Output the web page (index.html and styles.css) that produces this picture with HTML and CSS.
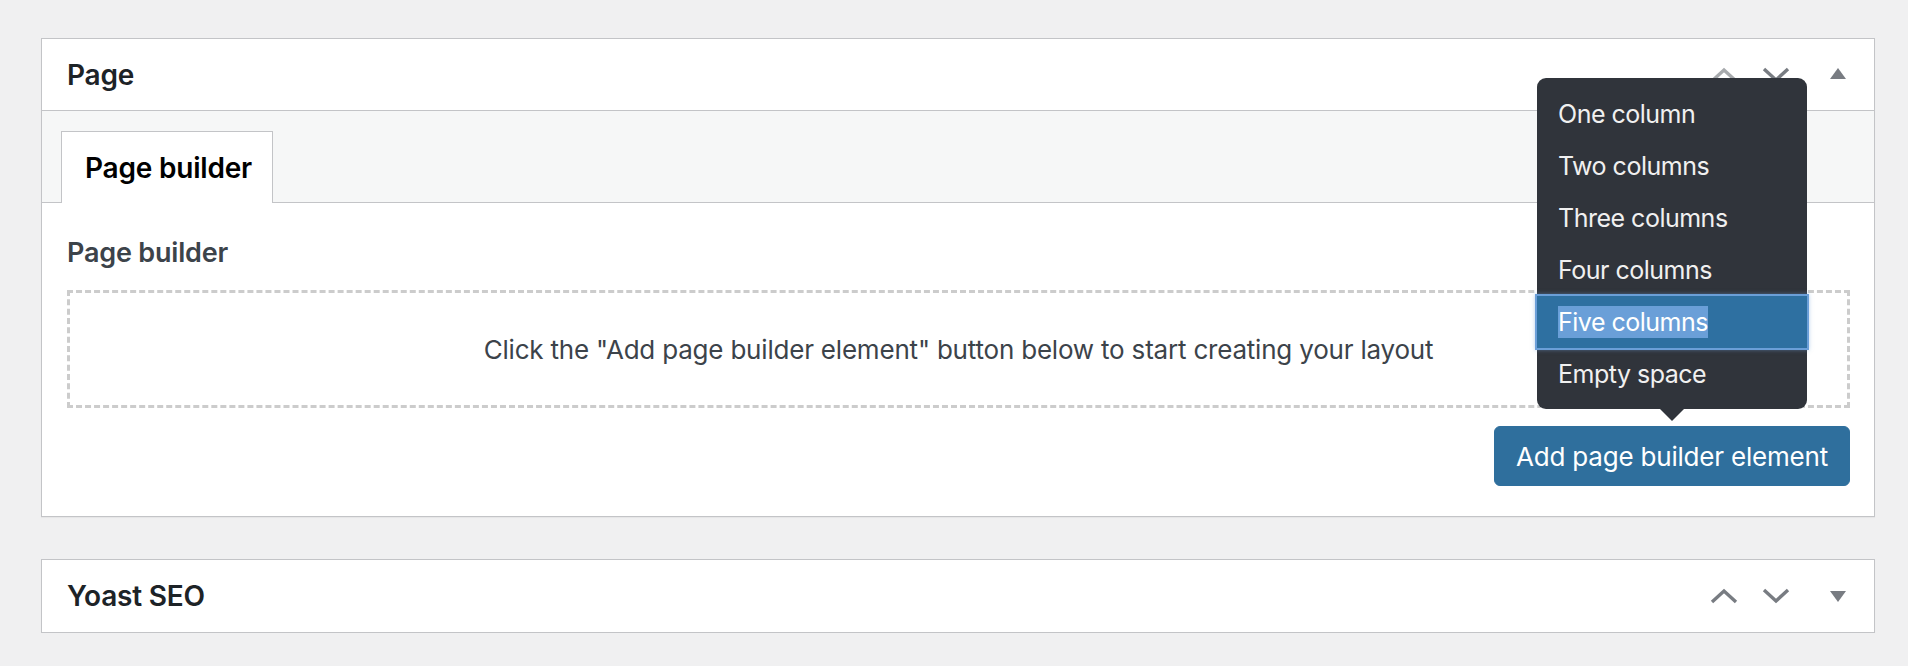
FILE: index.html
```html
<!DOCTYPE html>
<html lang="en">
<head>
<meta charset="utf-8">
<title>Page builder</title>
<link rel="stylesheet" href="styles.css">
</head>
<body>
<div class="postbox">
  <div class="postbox-header">
    <h2 class="hndle">Page</h2>
    <div class="handle-actions">
      <button class="handle-order is-disabled" aria-label="Move up">
        <svg width="28" height="16" viewBox="0 0 28 16"><polyline points="2,14 14,3 26,14" /></svg>
      </button>
      <button class="handle-order" aria-label="Move down">
        <svg width="28" height="16" viewBox="0 0 28 16"><polyline points="2,2 14,13 26,2" /></svg>
      </button>
      <button class="handle-toggle" aria-label="Toggle panel"><span class="tri tri-up"></span></button>
    </div>
  </div>
  <div class="tabs">
    <div class="tab">Page builder</div>
  </div>
  <div class="inside">
    <div class="field-label">Page builder</div>
    <div class="dropzone">Click the "Add page builder element" button below to start creating your layout</div>
    <div class="actions">
      <div class="btn-wrap">
        <button class="button-primary">Add page builder element</button>
        <ul class="menu">
          <li class="menu-item">One column</li>
          <li class="menu-item">Two columns</li>
          <li class="menu-item">Three columns</li>
          <li class="menu-item">Four columns</li>
          <li class="menu-item is-active"><span class="sel">Five columns</span></li>
          <li class="menu-item">Empty space</li>
        </ul>
      </div>
    </div>
  </div>
</div>

<div class="postbox postbox-closed">
  <div class="postbox-header">
    <h2 class="hndle">Yoast SEO</h2>
    <div class="handle-actions">
      <button class="handle-order" aria-label="Move up">
        <svg width="28" height="16" viewBox="0 0 28 16"><polyline points="2,14 14,3 26,14" /></svg>
      </button>
      <button class="handle-order" aria-label="Move down">
        <svg width="28" height="16" viewBox="0 0 28 16"><polyline points="2,2 14,13 26,2" /></svg>
      </button>
      <button class="handle-toggle" aria-label="Toggle panel"><span class="tri tri-down"></span></button>
    </div>
  </div>
</div>
</body>
</html>
```

FILE: styles.css
```css
* { box-sizing: border-box; }

html, body {
  margin: 0;
  background: #f0f0f1;
}

body {
  padding: 38px 33px 0 41px;
  font-family: Inter, "Noto Sans", sans-serif;
  color: #1d2327;
}

.postbox {
  background: #fff;
  border: 1px solid #c3c4c7;
  box-shadow: 0 1px 1px rgba(0, 0, 0, 0.04);
}

.postbox + .postbox {
  margin-top: 42px;
}

.postbox-header {
  height: 72px;
  display: flex;
  align-items: center;
  justify-content: space-between;
  border-bottom: 1px solid #c3c4c7;
}

.postbox-closed .postbox-header {
  border-bottom: none;
}

.hndle {
  margin: 0;
  padding-left: 25px;
  font-size: 28px;
  font-weight: 600;
  color: #1d2327;
  letter-spacing: -0.2px;
}

.handle-actions {
  display: flex;
  align-items: center;
  height: 100%;
}

.handle-actions button {
  background: none;
  border: 0;
  padding: 0;
  margin: 0;
  height: 100%;
  display: flex;
  align-items: center;
  justify-content: center;
  cursor: pointer;
}

.handle-order {
  width: 52px;
}

.handle-order svg polyline {
  fill: none;
  stroke: #787c82;
  stroke-width: 3.4;
}

.handle-order.is-disabled svg polyline {
  stroke: #a7aaad;
}

.handle-toggle {
  width: 72px;
}

.tri {
  display: block;
  width: 0;
  height: 0;
  border-left: 8px solid transparent;
  border-right: 8px solid transparent;
}

.tri-up {
  border-bottom: 11px solid #787c82;
  margin-top: -2px;
}

.tri-down {
  border-top: 11px solid #787c82;
}

.tabs {
  display: flex;
  align-items: flex-end;
  padding: 20px 0 0 19px;
  background: #f6f7f7;
  border-bottom: 1px solid #c3c4c7;
}

.tab {
  height: 72px;
  margin-bottom: -1px;
  padding: 0 20px 0 23px;
  display: flex;
  align-items: center;
  background: #fff;
  border: 1px solid #c3c4c7;
  border-bottom: none;
  font-size: 28px;
  font-weight: 600;
  color: #000;
  letter-spacing: -0.2px;
}

.inside {
  padding: 32px 24px 30px 25px;
}

.field-label {
  font-size: 27px;
  line-height: 36px;
  font-weight: 600;
  color: #3c434a;
  letter-spacing: -0.2px;
}

.dropzone {
  margin-top: 19px;
  height: 118px;
  border: 3px dashed #cccccc;
  display: flex;
  align-items: center;
  justify-content: center;
  font-size: 26px;
  color: #3c434a;
  letter-spacing: -0.2px;
}

.actions {
  display: flex;
  justify-content: flex-end;
  margin-top: 18px;
}

.btn-wrap {
  position: relative;
}

.button-primary {
  display: block;
  height: 60px;
  padding: 0 21px;
  background: #2f6f9d;
  border: 1px solid #2f6f9d;
  border-radius: 6px;
  color: #fff;
  font-family: Inter, "Noto Sans", sans-serif;
  font-size: 26px;
  letter-spacing: -0.2px;
  cursor: pointer;
}

.menu {
  position: absolute;
  left: 50%;
  bottom: calc(100% + 17px);
  transform: translateX(-50%);
  width: 270px;
  margin: 0;
  padding: 10px 0 9px;
  list-style: none;
  background: #30343b;
  border-radius: 9px;
  z-index: 10;
}

.menu::after {
  content: "";
  position: absolute;
  left: 50%;
  top: 100%;
  transform: translateX(-50%);
  border-left: 12px solid transparent;
  border-right: 12px solid transparent;
  border-top: 12px solid #30343b;
}

.menu-item {
  height: 52px;
  display: flex;
  align-items: center;
  padding: 0 21px;
  color: #f0f0f0;
  font-size: 25px;
  letter-spacing: -0.5px;
}

.menu-item.is-active {
  background: #2e70a1;
  box-shadow: 0 0 0 2px #6b9fd8, 0 0 4px 2px rgba(107, 159, 216, 0.5);
  color: #fff;
}

.sel {
  background: #6a9fd8;
  line-height: 32px;
}
```
